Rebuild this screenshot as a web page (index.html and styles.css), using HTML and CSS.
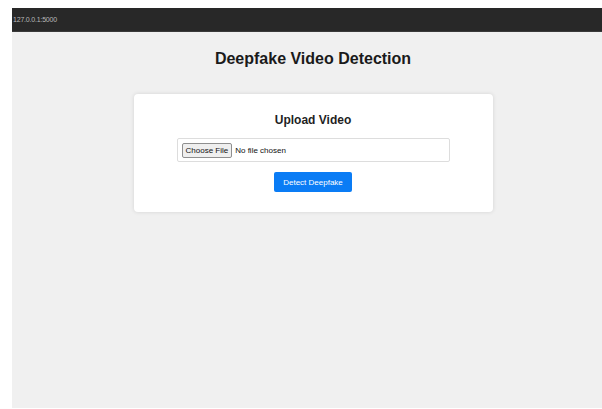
FILE: index.html
```html
<!DOCTYPE html>
<html lang="en">
<head>
<meta charset="utf-8">
<title>Deepfake Video Detection</title>
<link rel="stylesheet" href="styles.css">
</head>
<body>
  <div class="frame">
    <div class="address-bar"><span class="address">127.0.0.1:5000</span></div>
    <main class="page">
      <h1 class="title">Deepfake Video Detection</h1>
      <section class="card">
        <h2 class="card-title">Upload Video</h2>
        <form class="upload-form">
          <div class="file-field">
            <input class="file-input" type="file" accept="video/*">
          </div>
          <button class="detect-btn" type="submit">Detect Deepfake</button>
        </form>
      </section>
    </main>
  </div>
</body>
</html>
```

FILE: styles.css
```css
html, body {
  margin: 0;
  height: 100%;
  background: #ffffff;
}

body {
  font-family: "Liberation Sans", Arial, sans-serif;
}

.frame {
  display: flex;
  flex-direction: column;
  height: 408px;
  padding: 8px 0 0 12px;
  box-sizing: border-box;
}

.address-bar {
  height: 23px;
  background: #282828;
  border-bottom: 1px solid #3a3a3a;
  display: flex;
  align-items: center;
  flex: none;
}

.address {
  margin-left: 1px;
  font-size: 7px;
  color: #b8b8b8;
  letter-spacing: -0.2px;
}

.page {
  flex: 1;
  background: #f0f0f0;
  display: flex;
  flex-direction: column;
  align-items: center;
  padding-left: 12px;
}

.title {
  margin: 17px 0 0;
  font-size: 16px;
  font-weight: bold;
  color: #1a1a1a;
  line-height: 20px;
}

.card {
  margin-top: 25px;
  width: 359px;
  box-sizing: border-box;
  background: #ffffff;
  border-radius: 4px;
  box-shadow: 0 0 4px rgba(0, 0, 0, 0.12);
  padding: 19px 43px 20px;
  display: flex;
  flex-direction: column;
  align-items: center;
}

.card-title {
  margin: 0;
  font-size: 12px;
  font-weight: bold;
  color: #1f1f1f;
  line-height: 15px;
}

.upload-form {
  margin-top: 10px;
  width: 100%;
  display: flex;
  flex-direction: column;
  align-items: center;
  gap: 10px;
}

.file-field {
  width: 100%;
  box-sizing: border-box;
  border: 1px solid #dddddd;
  border-radius: 2px;
  height: 24px;
  padding: 0 4px;
  display: flex;
  align-items: center;
}

.file-input {
  font-family: "Liberation Sans", Arial, sans-serif;
  font-size: 8px;
  color: #111111;
}

.file-input::file-selector-button {
  font-family: "Liberation Sans", Arial, sans-serif;
  font-size: 8px;
  padding: 2px 3px;
  margin-right: 3px;
  background: #efefef;
  border: 1px solid #8f8f8f;
  border-radius: 2px;
  color: #111111;
}

.detect-btn {
  width: 78px;
  height: 20px;
  border: none;
  border-radius: 2px;
  background: #0a7cf5;
  color: #ffffff;
  font-family: "Liberation Sans", Arial, sans-serif;
  font-size: 8px;
  padding: 0;
}
```
